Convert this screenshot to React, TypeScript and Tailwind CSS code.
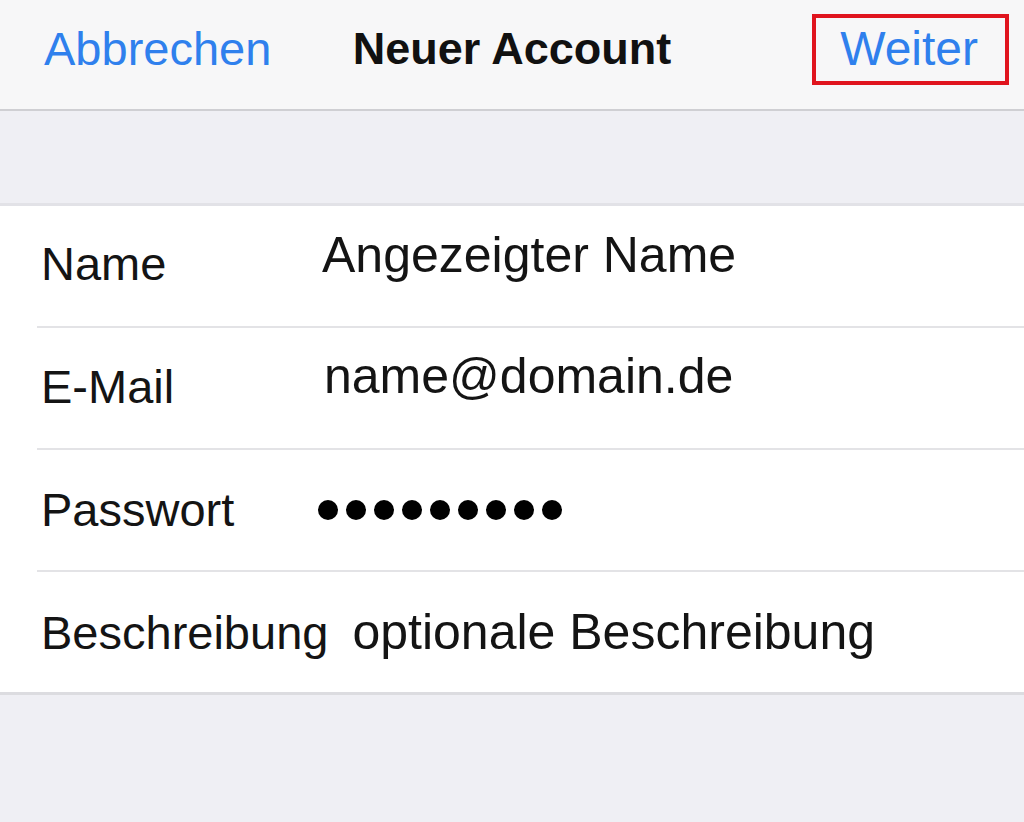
import React from "react";

const font = { fontFamily: '"Liberation Sans", Arial, sans-serif' };

export default function App() {
  return (
    <div className="w-[1024px] h-[822px] bg-[#efeff4] flex flex-col overflow-hidden text-[#141414]" style={font}>
      {/* Nav bar */}
      <div className="h-[111px] bg-[#f7f7f8] border-b-[2px] border-[#cfcfd3] grid grid-cols-[1fr_auto_1fr] items-start shrink-0">
        <div className="pl-[44px] pt-[25px] text-[47px] leading-[47px] text-[#2f80ed]">Abbrechen</div>
        <div className="pt-[25px] text-[45px] leading-[47px] font-bold text-[#111]">Neuer Account</div>
        <div className="flex justify-end pr-[15px] pt-[14px]">
          <div className="border-[4px] border-[#e0141e] pl-[24px] pr-[27px] pt-[7px] pb-[9px] text-[48px] leading-[47px] text-[#2f80ed]">
            Weiter
          </div>
        </div>
      </div>

      {/* Spacer */}
      <div className="h-[95px] shrink-0 border-b-[3px] border-[#e2e2e7]" />

      {/* Form */}
      <div className="bg-white pl-[37px] border-b-[3px] border-[#dcdce0] shrink-0">
        <div className="h-[122px] border-b-[2px] border-[#e3e3e6] flex items-start">
          <div className="w-[285px] shrink-0 pl-[4px] pt-[34px] text-[47px] leading-[47px]">Name</div>
          <div className="pt-[24px] text-[50px] leading-[50px]">Angezeigter Name</div>
        </div>
        <div className="h-[122px] border-b-[2px] border-[#e3e3e6] flex items-start">
          <div className="w-[285px] shrink-0 pl-[4px] pt-[35px] text-[47px] leading-[47px]">E-Mail</div>
          <div className="pt-[23px] pl-[2px] text-[50px] leading-[50px]">name@domain.de</div>
        </div>
        <div className="h-[122px] border-b-[2px] border-[#e3e3e6] flex items-start">
          <div className="w-[281px] shrink-0 pl-[4px] pt-[36px] text-[47px] leading-[47px]">Passwort</div>
          <div className="pt-[50px] flex gap-[8px]">
            {Array.from({ length: 9 }).map((_, i) => (
              <span key={i} className="block w-[20px] h-[20px] rounded-full bg-black" />
            ))}
          </div>
        </div>
        <div className="h-[120px] flex items-start">
          <div className="shrink-0 pl-[4px] pt-[37px] text-[47px] leading-[47px]">Beschreibung</div>
          <div className="pt-[35px] pl-[24px] text-[50px] leading-[50px]">optionale Beschreibung</div>
        </div>
      </div>

      <div className="flex-1" />
    </div>
  );
}
